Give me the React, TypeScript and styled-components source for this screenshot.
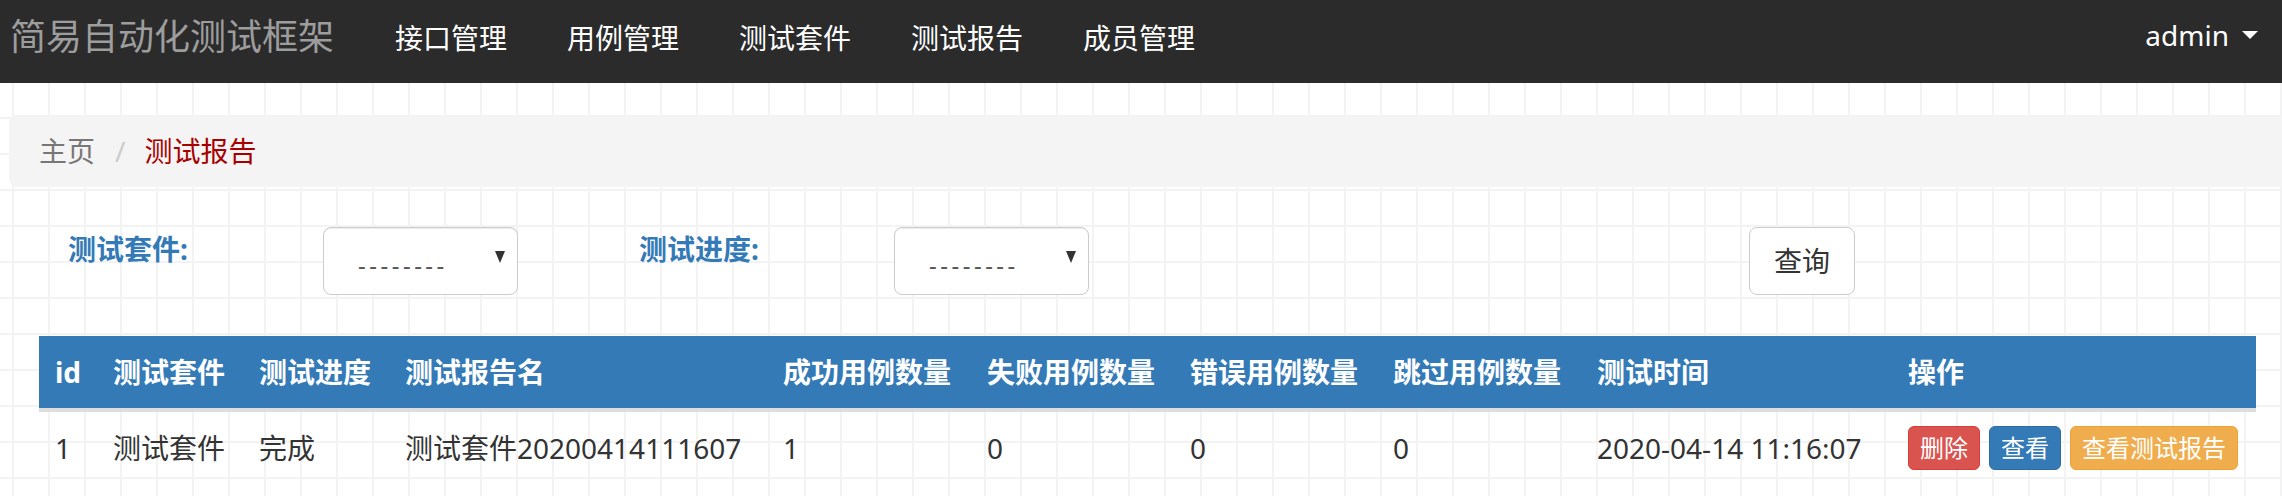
import React from "react"
import styled, { createGlobalStyle } from "styled-components"

const GlobalStyle = createGlobalStyle`
  html, body {
    margin: 0;
    padding: 0;
  }
  body {
    font-family: "Noto Sans", "Noto Sans CJK SC", sans-serif;
    font-size: 28px;
    line-height: 40px;
    color: #333;
    overflow: hidden;
    background-color: #fff;
    background-image:
      linear-gradient(to right, #f3f3f3 2px, transparent 2px),
      linear-gradient(to bottom, #f3f3f3 2px, transparent 2px);
    background-size: 36px 36px;
    background-position: 12px 9px;
  }
`

const Navbar = styled.nav`
  height: 83px;
  background: #2b2b2b;
  display: flex;
  align-items: center;
  padding: 0 24px 10px 10px;
  box-sizing: border-box;
`

const Brand = styled.div`
  font-size: 36px;
  line-height: 40px;
  color: #9d9d9d;
  margin-right: 31px;
  white-space: nowrap;
`

const NavLink = styled.a`
  color: #fff;
  padding: 0 30px;
  text-decoration: none;
  white-space: nowrap;
  position: relative;
  top: 1px;
`

const UserMenu = styled.div`
  margin-left: auto;
  display: flex;
  align-items: center;
  gap: 13px;
  color: #fff;
  position: relative;
  top: -2px;
`

const Caret = styled.span`
  width: 0;
  height: 0;
  border-left: 8px solid transparent;
  border-right: 8px solid transparent;
  border-top: 8px solid #fff;
`

const Main = styled.main`
  padding-top: 32px;
`

const Crumb = styled.li<{ $active?: boolean }>`
  color: ${({ $active }) => ($active ? "#a80000" : "#777")};
`

const Breadcrumb = styled.ol`
  list-style: none;
  margin: 0 -20px 0 9px;
  padding: 16px 30px;
  background: #f4f4f4;
  border-radius: 8px;
  display: flex;

  ${Crumb} + ${Crumb}::before {
    content: "/";
    color: #ccc;
    padding: 0 19px 0 20px;
  }
`

const FilterRow = styled.form`
  margin-top: 40px;
  padding-left: 68px;
  display: grid;
  grid-template-columns: 255px 316px 255px 855px auto;
  align-items: start;
`

const FilterLabel = styled.label`
  color: #337ab7;
  font-weight: 700;
  padding-top: 2px;
  white-space: nowrap;
`

const SelectBox = styled.div`
  width: 195px;
  height: 68px;
  box-sizing: border-box;
  border: 1px solid #ccc;
  border-radius: 8px;
  background: #fff;
  display: flex;
  align-items: center;
  justify-content: space-between;
  padding: 0 12px 0 34px;
  color: #555;
  box-shadow: inset 0 1px 1px rgba(0, 0, 0, 0.075);
`

const Dashes = styled.span`
  font-size: 24px;
  letter-spacing: 3.5px;
  position: relative;
  top: 4px;
`

const SelectArrow = styled.span`
  width: 0;
  height: 0;
  border-left: 5px solid transparent;
  border-right: 5px solid transparent;
  border-top: 12px solid #333;
  position: relative;
  top: -4px;
`

const Button = styled.button`
  font-family: inherit;
  font-size: 28px;
  line-height: 40px;
  height: 68px;
  padding: 0 24px;
  border: 1px solid #ccc;
  border-radius: 8px;
  background: #fff;
  color: #333;
  cursor: pointer;
`

const Table = styled.table`
  margin: 41px 26px 0 39px;
  width: 2217px;
  border-collapse: collapse;
  table-layout: fixed;
`

const HeadCell = styled.th`
  background: #337ab7;
  color: #fff;
  font-weight: 700;
  text-align: left;
  padding: 16px 16px;
  border-bottom: 4px solid #ddd;
  white-space: nowrap;
`

const Cell = styled.td`
  padding: 16px 16px;
  white-space: nowrap;
  vertical-align: middle;
`

const ActionCell = styled(Cell)`
  padding: 14px 16px;
`

const Actions = styled.div`
  display: flex;
  gap: 9px;
`

const tones = {
  danger: { bg: "#d9534f", border: "#d43f3a" },
  primary: { bg: "#337ab7", border: "#2e6da4" },
  warning: { bg: "#f0ad4e", border: "#eea236" },
}

const SmallButton = styled.button<{ $tone: keyof typeof tones }>`
  font-family: inherit;
  font-size: 24px;
  line-height: 38px;
  padding: 2px 11px;
  border-radius: 6px;
  color: #fff;
  background: ${({ $tone }) => tones[$tone].bg};
  border: 1px solid ${({ $tone }) => tones[$tone].border};
  cursor: pointer;
`

const columns = [
  { title: "id", width: 58 },
  { title: "测试套件", width: 146 },
  { title: "测试进度", width: 146 },
  { title: "测试报告名", width: 378 },
  { title: "成功用例数量", width: 204 },
  { title: "失败用例数量", width: 203 },
  { title: "错误用例数量", width: 203 },
  { title: "跳过用例数量", width: 204 },
  { title: "测试时间", width: 311 },
  { title: "操作", width: 364 },
]

const reports = [
  {
    id: 1,
    suite: "测试套件",
    status: "完成",
    name: "测试套件20200414111607",
    success: 1,
    failure: 0,
    error: 0,
    skipped: 0,
    time: "2020-04-14 11:16:07",
  },
]

const App: React.FC = () => (
  <>
    <GlobalStyle />
    <Navbar>
      <Brand>简易自动化测试框架</Brand>
      <NavLink>接口管理</NavLink>
      <NavLink>用例管理</NavLink>
      <NavLink>测试套件</NavLink>
      <NavLink>测试报告</NavLink>
      <NavLink>成员管理</NavLink>
      <UserMenu>
        admin
        <Caret />
      </UserMenu>
    </Navbar>
    <Main>
      <Breadcrumb>
        <Crumb>主页</Crumb>
        <Crumb $active>测试报告</Crumb>
      </Breadcrumb>
      <FilterRow>
        <FilterLabel>测试套件:</FilterLabel>
        <div>
          <SelectBox>
            <Dashes>--------</Dashes>
            <SelectArrow />
          </SelectBox>
        </div>
        <FilterLabel>测试进度:</FilterLabel>
        <div>
          <SelectBox>
            <Dashes>--------</Dashes>
            <SelectArrow />
          </SelectBox>
        </div>
        <div>
          <Button type="button">查询</Button>
        </div>
      </FilterRow>
      <Table>
        <colgroup>
          {columns.map((c) => (
            <col key={c.title} style={{ width: c.width }} />
          ))}
        </colgroup>
        <thead>
          <tr>
            {columns.map((c) => (
              <HeadCell key={c.title}>{c.title}</HeadCell>
            ))}
          </tr>
        </thead>
        <tbody>
          {reports.map((r) => (
            <tr key={r.id}>
              <Cell>{r.id}</Cell>
              <Cell>{r.suite}</Cell>
              <Cell>{r.status}</Cell>
              <Cell>{r.name}</Cell>
              <Cell>{r.success}</Cell>
              <Cell>{r.failure}</Cell>
              <Cell>{r.error}</Cell>
              <Cell>{r.skipped}</Cell>
              <Cell>{r.time}</Cell>
              <ActionCell>
                <Actions>
                  <SmallButton $tone="danger">删除</SmallButton>
                  <SmallButton $tone="primary">查看</SmallButton>
                  <SmallButton $tone="warning">查看测试报告</SmallButton>
                </Actions>
              </ActionCell>
            </tr>
          ))}
        </tbody>
      </Table>
    </Main>
  </>
)

export default App
